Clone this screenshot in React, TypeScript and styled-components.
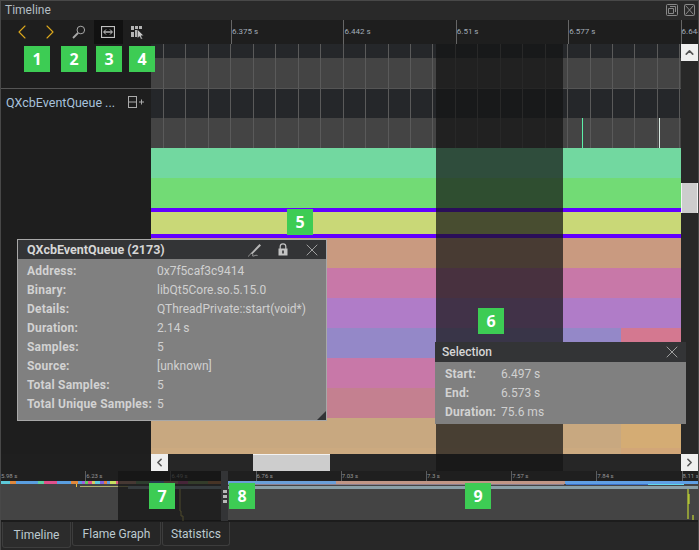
import { Fragment } from "react";
import styled, { createGlobalStyle } from "styled-components";
import { ChevronLeft, ChevronRight, ChevronUp, X } from "lucide-react";

const GlobalStyle = createGlobalStyle`
  html, body {
    margin: 0;
    padding: 0;
    background: #1f1f1f;
  }
  * {
    box-sizing: border-box;
  }
`;

const Window = styled.div`
  position: relative;
  width: 699px;
  height: 550px;
  overflow: hidden;
  display: flex;
  flex-direction: column;
  background: #1f1f1f;
  color: #c8c8c8;
  font-family: Roboto, "Liberation Sans", sans-serif;
  font-size: 12px;

  &::after {
    content: "";
    position: absolute;
    inset: 0;
    border: 1px solid #484848;
    border-bottom: 0;
    pointer-events: none;
  }
`;

const TitleBar = styled.div`
  height: 20px;
  flex: none;
  display: flex;
  align-items: center;
  justify-content: space-between;
  padding: 0 4px 0 5px;
  background: #292929;
  color: #b4bec4;
  font-size: 12px;
`;

const TitleButtons = styled.div`
  display: flex;
  gap: 6px;
  align-items: center;
`;

const Header = styled.div`
  height: 24px;
  flex: none;
  display: flex;
  background: #1e1e1e;
`;

const Toolbar = styled.div`
  width: 151px;
  flex: none;
  display: flex;
  align-items: stretch;
  padding-left: 7px;
`;

const ToolButton = styled.div<{ $width: number; $active?: boolean }>`
  width: ${(p) => p.$width}px;
  display: flex;
  align-items: center;
  justify-content: center;
  background: ${(p) => (p.$active ? "#111111" : "transparent")};
`;

const Ruler = styled.div`
  flex: 1;
  display: flex;
  overflow: hidden;
  padding-left: 80px;
`;

const RulerTick = styled.div`
  width: 112.4px;
  flex: none;
  border-left: 1px solid #666;
  padding: 7px 0 0 0;
  color: #a3adb8;
  font-size: 8px;
  white-space: nowrap;
`;

const Body = styled.div`
  flex: none;
  height: 410px;
  display: flex;
`;

const Sidebar = styled.div`
  width: 151px;
  flex: none;
  background: #1e1e1e;
`;

const SidebarSpacer = styled.div`
  height: 45px;
  border-bottom: 1px solid #555;
`;

const ThreadLabel = styled.div`
  display: flex;
  align-items: center;
  justify-content: space-between;
  height: 27px;
  padding: 0 6px 0 6px;
  color: #a8c2dc;
  font-size: 12.5px;
  white-space: nowrap;
`;

const Tracks = styled.div`
  width: 530px;
  flex: none;
  display: flex;
  flex-direction: column;
`;

const Track = styled.div<{ $height: number; $color: string; $grid?: boolean; $line?: boolean }>`
  position: relative;
  flex: none;
  height: ${(p) => p.$height}px;
  display: flex;
  justify-content: flex-end;
  background-color: ${(p) => p.$color};
  border-bottom: ${(p) => (p.$line ? "1px solid #555" : "0")};
  background-image: ${(p) =>
    p.$grid
      ? "repeating-linear-gradient(to right, transparent 0, transparent 12px, #5a5a5a 12px, #5a5a5a 13px, transparent 13px, transparent 22.45px)"
      : "none"};
`;

const TrackEnd = styled.div<{ $color: string }>`
  width: 60px;
  background: ${(p) => p.$color};
`;

const Spike = styled.div<{ $x: number; $color: string }>`
  position: absolute;
  top: 0;
  bottom: 0;
  left: ${(p) => p.$x}px;
  width: 1px;
  background: ${(p) => p.$color};
`;

const VScroll = styled.div`
  flex: 1;
  display: flex;
  flex-direction: column;
  background: #282828;
`;

const ScrollButton = styled.div`
  width: 17px;
  height: 17px;
  flex: none;
  display: flex;
  align-items: center;
  justify-content: center;
  background: #efefef;
  color: #555;
`;

const VThumb = styled.div`
  width: 17px;
  height: 30px;
  flex: none;
  margin-top: 122px;
  background: #cdcdcd;
  border: solid #f2f2f2;
  border-width: 0 1px;
`;

const HScrollRow = styled.div`
  height: 17px;
  flex: none;
  display: flex;
`;

const HScrollGap = styled.div`
  width: 151px;
  flex: none;
`;

const HScroll = styled.div`
  flex: 1;
  display: flex;
  background: #262626;
`;

const HThumb = styled.div`
  width: 77px;
  flex: none;
  margin-left: 85px;
  margin-right: auto;
  background: #cdcdcd;
  border-top: 1px solid #f2f2f2;
`;

const HCorner = styled.div`
  width: 1px;
  flex: none;
`;

const SelectionShade = styled.div`
  position: absolute;
  left: 436px;
  top: 44px;
  width: 127px;
  height: 427px;
  background: rgba(20, 20, 20, 0.71);
`;

const MiniMap = styled.div`
  position: relative;
  height: 50px;
  flex: none;
  display: flex;
  flex-direction: column;
`;

const MiniRuler = styled.div`
  height: 10px;
  flex: none;
  display: flex;
  overflow: hidden;
  background: #1f1f1f;
`;

const MiniTick = styled.div`
  width: 85.2px;
  flex: none;
  border-left: 1px solid #5c5c5c;
  padding: 1px 0 0 0;
  color: #969696;
  font-size: 6px;
  line-height: 8px;
  white-space: nowrap;
`;

const MiniChart = styled.svg`
  display: block;
  width: 699px;
  height: 40px;
  flex: none;
`;

const MiniShade = styled.div`
  position: absolute;
  left: 118px;
  top: 0;
  width: 103px;
  height: 50px;
  background: rgba(20, 20, 20, 0.71);
`;

const MiniHandle = styled.div`
  position: absolute;
  left: 221px;
  top: 0;
  width: 7px;
  height: 50px;
  display: flex;
  flex-direction: column;
  align-items: center;
  justify-content: center;
  gap: 2px;
  background: #333436;
`;

const HandleDot = styled.div`
  width: 4px;
  height: 3px;
  background: #b8b8b8;
`;

const TabBar = styled.div`
  flex: 1;
  display: flex;
  align-items: flex-start;
  gap: 1px;
  padding-left: 2px;
  background: #272727;
  border-top: 1px solid #1c1c1c;
`;

const Tab = styled.div<{ $width: number; $active?: boolean }>`
  width: ${(p) => p.$width}px;
  height: ${(p) => (p.$active ? 26 : 24)}px;
  display: flex;
  align-items: center;
  justify-content: center;
  border: 1px solid #3d3d3d;
  border-top: 0;
  border-radius: 0 0 3px 3px;
  background: ${(p) => (p.$active ? "#2c2c2c" : "#262626")};
  color: #bccad0;
  font-size: 12px;
  padding-top: ${(p) => (p.$active ? 1 : 0)}px;
`;

const Badge = styled.div<{ $x: number; $y: number }>`
  position: absolute;
  left: ${(p) => p.$x}px;
  top: ${(p) => p.$y}px;
  width: 26px;
  height: 26px;
  display: flex;
  align-items: center;
  justify-content: center;
  background: #3dcc54;
  color: #fff;
  font-family: "Open Sans", sans-serif;
  font-size: 16px;
  font-weight: 700;
`;

const Popup = styled.div<{ $x: number; $y: number; $width: number; $height: number; $framed?: boolean }>`
  position: absolute;
  left: ${(p) => p.$x}px;
  top: ${(p) => p.$y}px;
  width: ${(p) => p.$width}px;
  height: ${(p) => p.$height}px;
  display: flex;
  flex-direction: column;
  background: #808080;
  border: ${(p) => (p.$framed ? "1px solid #a8a8a8" : "0")};
`;

const PopupHeader = styled.div<{ $height: number }>`
  height: ${(p) => p.$height}px;
  flex: none;
  display: flex;
  align-items: center;
  justify-content: space-between;
  background: #333436;
  color: #d6d6d6;
`;

const PopupTitle = styled.div<{ $bold?: boolean }>`
  padding-left: ${(p) => (p.$bold ? 9 : 7)}px;
  font-size: ${(p) => (p.$bold ? 12.5 : 12)}px;
  font-weight: ${(p) => (p.$bold ? 700 : 500)};
`;

const PopupIcons = styled.div`
  display: flex;
  align-items: center;
  gap: 14px;
  padding-right: 4px;
  color: #c4c4c4;
`;

const PenSlot = styled.div`
  display: flex;
  margin-right: 2px;
`;

const InfoGrid = styled.div<{ $labelWidth: number; $rowHeight: number; $left: number; $top: number }>`
  display: grid;
  grid-template-columns: ${(p) => p.$labelWidth}px 1fr;
  grid-auto-rows: ${(p) => p.$rowHeight}px;
  align-items: center;
  padding: ${(p) => p.$top}px 0 0 ${(p) => p.$left}px;
`;

const InfoLabel = styled.div`
  color: #d2d2d2;
  font-weight: 700;
  letter-spacing: 0.2px;
  white-space: nowrap;
`;

const InfoValue = styled.div`
  color: #d0d0d0;
  white-space: nowrap;
`;

const ResizeGrip = styled.div`
  position: absolute;
  right: 0;
  bottom: 0;
  width: 0;
  height: 0;
  border-style: solid;
  border-width: 0 0 9px 9px;
  border-color: transparent transparent #333436 transparent;
`;

const tooltipRows = [
  ["Address:", "0x7f5caf3c9414"],
  ["Binary:", "libQt5Core.so.5.15.0"],
  ["Details:", "QThreadPrivate::start(void*)"],
  ["Duration:", "2.14 s"],
  ["Samples:", "5"],
  ["Source:", "[unknown]"],
  ["Total Samples:", "5"],
  ["Total Unique Samples:", "5"],
];

const selectionRows = [
  ["Start:", "6.497 s"],
  ["End:", "6.573 s"],
  ["Duration:", "75.6 ms"],
];

const badges = [
  { n: 1, x: 24, y: 46 },
  { n: 2, x: 61, y: 46 },
  { n: 3, x: 96, y: 46 },
  { n: 4, x: 129, y: 46 },
  { n: 5, x: 287, y: 209 },
  { n: 6, x: 478, y: 308 },
  { n: 7, x: 149, y: 483 },
  { n: 8, x: 229, y: 483 },
  { n: 9, x: 465, y: 483 },
];

// top strip of the overview chart: [x, width, colour]
const stripSegments: [number, number, string][] = [
  [1, 9, "#5cc8d8"],
  [10, 6, "#e0883c"],
  [16, 22, "#5a9ee0"],
  [38, 6, "#5cd0a0"],
  [44, 13, "#e0508c"],
  [57, 14, "#5a9ee0"],
  [71, 7, "#e0883c"],
  [78, 4, "#5a9ee0"],
  [82, 3, "#a060e0"],
  [85, 3, "#60d060"],
  [88, 4, "#e05090"],
  [92, 3, "#d0d060"],
  [95, 5, "#60c8e0"],
  [100, 4, "#8060e0"],
  [104, 3, "#e08040"],
  [107, 3, "#60a0e0"],
  [110, 6, "#c8e060"],
  [116, 4, "#e06080"],
  [120, 16, "#c09080"],
  [136, 14, "#70a070"],
  [150, 14, "#5a9ee0"],
  [164, 14, "#c09080"],
  [178, 10, "#c05090"],
  [188, 20, "#80a060"],
  [208, 20, "#c08050"],
  [228, 108, "#6a9fd8"],
  [336, 229, "#c09686"],
  [565, 134, "#5f9fe4"],
];

const GridIcon = () => (
  <svg width="17" height="13" viewBox="0 0 17 13" fill="none" stroke="#aaa">
    <rect x="0.5" y="0.5" width="8" height="11" />
    <path d="M0.5 6h8M11 6h5M13.5 3.5v5" />
  </svg>
);

const RestoreIcon = () => (
  <svg width="12" height="12" viewBox="0 0 12 12" fill="none" stroke="#888">
    <rect x="0.5" y="0.5" width="11" height="11" rx="1" />
    <path d="M4 2.5h5.5v5.5M2.5 4.5h5v5h-5z" />
  </svg>
);

const CloseBoxIcon = () => (
  <svg width="11" height="12" viewBox="0 0 11 12" fill="none" stroke="#888">
    <rect x="0.5" y="0.5" width="10" height="11" rx="1" />
    <path d="M1.5 1.5l8 9M9.5 1.5l-8 9" />
  </svg>
);

const SearchIcon = () => (
  <svg width="14" height="14" viewBox="0 0 14 14" fill="none" stroke="#a8a8a8" strokeWidth="1">
    <circle cx="8.8" cy="5" r="3.8" />
    <path d="M6 8L1 13" strokeWidth="1.8" />
  </svg>
);

const FitIcon = () => (
  <svg width="14" height="12" viewBox="0 0 14 12" fill="none" stroke="#c0c0c0">
    <rect x="0.5" y="0.5" width="13" height="11" strokeWidth="1.2" />
    <path d="M3 6h8" strokeWidth="1.4" />
    <path d="M5 3.5L2.5 6 5 8.5M9 3.5L11.5 6 9 8.5" />
  </svg>
);

const PickIcon = () => (
  <svg width="13" height="13" viewBox="0 0 13 13" fill="#b4b4b4">
    <rect x="0" y="0" width="3" height="4" />
    <rect x="4" y="0" width="3" height="3" />
    <rect x="8" y="0" width="3" height="3" />
    <rect x="0" y="6" width="3" height="5" />
    <rect x="4" y="4" width="2.5" height="7" />
    <path d="M6.5 3.5L12.5 9.5 10 9.8 11.5 13 10 13 8.6 10.4 6.5 12z" fill="#c8c8c8" stroke="#1e1e1e" strokeWidth="0.4" />
  </svg>
);

const PenIcon = () => (
  <svg width="14" height="14" viewBox="0 0 14 14" fill="none" stroke="#b8b8b8">
    <path d="M3.5 9.5L11.5 1l1.5 1.5L5 10.5l-2 .5z" fill="#b8b8b8" stroke="none" />
    <path d="M0.5 13.5c1-2 3-4 4-3s-1 3 1 2.5 2-1 4-.5" strokeWidth="0.8" />
  </svg>
);

const LockIcon = () => (
  <svg width="10" height="13" viewBox="0 0 10 13" fill="none">
    <path d="M2.2 6V3.6a2.8 2.8 0 0 1 5.6 0V6" stroke="#c4c4c4" strokeWidth="1.2" />
    <rect x="0.5" y="5.5" width="9" height="7" fill="#c4c4c4" />
    <rect x="4.2" y="7.5" width="1.6" height="3" fill="#333436" />
  </svg>
);

const App = () => {
  return (
    <Window>
      <GlobalStyle />
      <TitleBar>
        <span>Timeline</span>
        <TitleButtons>
          <RestoreIcon />
          <CloseBoxIcon />
        </TitleButtons>
      </TitleBar>

      <Header>
        <Toolbar>
          <ToolButton $width={30}>
            <ChevronLeft size={24} color="#dca81c" strokeWidth={1.1} />
          </ToolButton>
          <ToolButton $width={29}>
            <ChevronRight size={24} color="#dca81c" strokeWidth={1.1} />
          </ToolButton>
          <ToolButton $width={31}>
            <SearchIcon />
          </ToolButton>
          <ToolButton $width={30} $active>
            <FitIcon />
          </ToolButton>
          <ToolButton $width={29}>
            <PickIcon />
          </ToolButton>
        </Toolbar>
        <Ruler>
          {["6.375 s", "6.442 s", "6.51 s", "6.577 s", "6.644 s"].map((t) => (
            <RulerTick key={t}>{t}</RulerTick>
          ))}
        </Ruler>
      </Header>

      <Body>
        <Sidebar>
          <SidebarSpacer />
          <ThreadLabel>
            <span>QXcbEventQueue ...</span>
            <GridIcon />
          </ThreadLabel>
        </Sidebar>
        <Tracks>
          <Track $height={14} $color="#25272a" $grid />
          <Track $height={31} $color="#444444" $grid $line />
          <Track $height={29} $color="#25272a" $grid />
          <Track $height={30} $color="#444444" $grid>
            <Spike $x={431} $color="#5cf0a8" />
            <Spike $x={508} $color="#d8e8e0" />
          </Track>
          <Track $height={30} $color="#72d8a0" />
          <Track $height={30} $color="#72db75" />
          <Track $height={4} $color="#6200ff" />
          <Track $height={22} $color="#c9d877" />
          <Track $height={4} $color="#6200ff" />
          <Track $height={30} $color="#c99a80" />
          <Track $height={30} $color="#c878a8" />
          <Track $height={30} $color="#b07cc8" />
          <Track $height={30} $color="#9488c8">
            <TrackEnd $color="#d47890" />
          </Track>
          <Track $height={30} $color="#c878a8" />
          <Track $height={30} $color="#c48090" />
          <Track $height={30} $color="#c8a880">
            <TrackEnd $color="#d4ac74" />
          </Track>
          <Track $height={6} $color="#ccaa80">
            <TrackEnd $color="#d2a678" />
          </Track>
        </Tracks>
        <VScroll>
          <ScrollButton>
            <ChevronUp size={13} strokeWidth={3} />
          </ScrollButton>
          <VThumb />
        </VScroll>
      </Body>

      <HScrollRow>
        <HScrollGap />
        <HScroll>
          <ScrollButton>
            <ChevronLeft size={13} strokeWidth={3} />
          </ScrollButton>
          <HThumb />
          <ScrollButton>
            <ChevronRight size={13} strokeWidth={3} />
          </ScrollButton>
          <HCorner />
        </HScroll>
      </HScrollRow>

      <MiniMap>
        <MiniRuler>
          {["5.98 s", "6.23 s", "6.49 s", "6.76 s", "7.03 s", "7.3 s", "7.57 s", "7.84 s", "8.11 s"].map((t) => (
            <MiniTick key={t}>{t}</MiniTick>
          ))}
        </MiniRuler>
        <MiniChart viewBox="0 0 699 40">
          <rect x="0" y="0" width="699" height="40" fill="#444444" />
          <rect x="0" y="39" width="699" height="1" fill="#1c1c1c" />
          {stripSegments.map(([x, w, c]) => (
            <rect key={x} x={x} y="0" width={w} height="3" fill={c} />
          ))}
          <rect x="648" y="3" width="36" height="1" fill="#60d8f0" />
          <rect x="566" y="3" width="82" height="1" fill="#3a70c8" />
          <rect x="228" y="3" width="336" height="1" fill="#8a8090" />
          <rect x="80" y="5" width="48" height="1" fill="#b0b070" />
          <rect x="128" y="5" width="571" height="3" fill="#8aa0a8" />
          <rect x="76" y="3" width="1" height="3" fill="#e8c040" />
          <path d="M180 8v22h1v5h2v5" stroke="#d8c860" fill="none" />
          <path d="M688 8v30M689 13v10M693 34v5" stroke="#d8f030" fill="none" />
        </MiniChart>
        <MiniShade />
        <MiniHandle>
          <HandleDot />
          <HandleDot />
          <HandleDot />
        </MiniHandle>
      </MiniMap>

      <TabBar>
        <Tab $width={69} $active>Timeline</Tab>
        <Tab $width={89}>Flame Graph</Tab>
        <Tab $width={68}>Statistics</Tab>
      </TabBar>

      <SelectionShade />

      <Popup $x={17} $y={239} $width={310} $height={182} $framed>
        <PopupHeader $height={19}>
          <PopupTitle $bold>QXcbEventQueue (2173)</PopupTitle>
          <PopupIcons>
            <PenSlot>
              <PenIcon />
            </PenSlot>
            <LockIcon />
            <X size={20} strokeWidth={0.9} />
          </PopupIcons>
        </PopupHeader>
        <InfoGrid $labelWidth={130} $rowHeight={19} $left={9} $top={2}>
          {tooltipRows.map(([label, value]) => (
            <Fragment key={label}>
              <InfoLabel>{label}</InfoLabel>
              <InfoValue>{value}</InfoValue>
            </Fragment>
          ))}
        </InfoGrid>
        <ResizeGrip />
      </Popup>

      <Popup $x={435} $y={342} $width={251} $height={82}>
        <PopupHeader $height={20}>
          <PopupTitle>Selection</PopupTitle>
          <PopupIcons>
            <X size={20} strokeWidth={0.9} />
          </PopupIcons>
        </PopupHeader>
        <InfoGrid $labelWidth={56} $rowHeight={19} $left={10} $top={2}>
          {selectionRows.map(([label, value]) => (
            <Fragment key={label}>
              <InfoLabel>{label}</InfoLabel>
              <InfoValue>{value}</InfoValue>
            </Fragment>
          ))}
        </InfoGrid>
      </Popup>

      {badges.map((b) => (
        <Badge key={b.n} $x={b.x} $y={b.y}>
          {b.n}
        </Badge>
      ))}
    </Window>
  );
};

export default App;
